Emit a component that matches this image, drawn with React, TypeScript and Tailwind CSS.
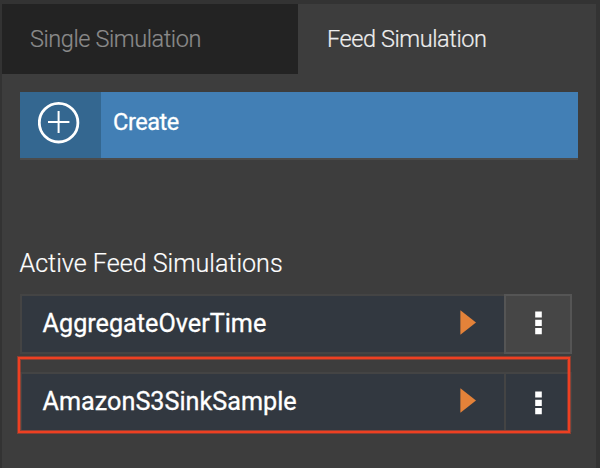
function PlayIcon() {
  return (
    <svg className="mb-[3px] h-[25px] w-4 shrink-0" viewBox="0 0 16 25" aria-hidden="true">
      <path d="M0.4 0.2 16 12.5 0.4 24.8Z" fill="#e48239" />
    </svg>
  );
}

function MoreIcon() {
  return (
    <svg className="h-6 w-[7px] shrink-0" viewBox="0 0 7 24" aria-hidden="true">
      <path d="M.2.4h6.6v6.2H.2zM.2 8.7h6.6v6.2H.2zM.2 17h6.6v6.2H.2z" fill="#fff" />
    </svg>
  );
}

function SimulationRow({ name, selected }: { name: string; selected: boolean }) {
  return (
    <div className="flex h-[60px] w-[552px]">
      <div className="flex w-[484px] items-center justify-between border-2 border-r-0 border-[#444444] bg-[#323840] pr-7 pl-[20.6px]">
        <span className="text-[25.2px] leading-7 font-normal whitespace-nowrap text-white [-webkit-text-stroke:0.3px_white]">{name}</span>
        <PlayIcon />
      </div>
      <button
        aria-label={`${name} options`}
        className={
          selected
            ? "flex w-[68px] justify-center border-2 border-[#444444] bg-[#323840] pt-[17px]"
            : "flex w-[68px] justify-center border-2 border-[#555555] bg-[#464646] pt-[15px]"
        }
      >
        <MoreIcon />
      </button>
    </div>
  );
}

export default function App() {
  return (
    <div className="h-[468px] w-[600px] overflow-hidden bg-[#333333] pt-1 pr-1 pl-0.5 font-['Roboto',sans-serif]">
      <main className="h-[464px] bg-[#3d3d3d]">
        <nav className="flex h-[70px] text-[23.5px] leading-7 font-light tracking-[-0.42px]">
          <button className="w-[296px] bg-[#232323] pl-7 text-left text-[#8b8b8b] [-webkit-text-stroke:0.2px_#8b8b8b]">Single Simulation</button>
          <button className="flex-1 pl-[29px] text-left text-[#eeeeee] [-webkit-text-stroke:0.2px_#eeeeee]">Feed Simulation</button>
        </nav>
        <div className="px-[18px] pt-[18px]">
          <button className="flex h-[68px] w-[558px] border-b-2 border-[#4b4b4b] bg-[#427fb5] text-left">
            <span className="h-[66px] w-[81px] bg-[#346790] pt-2.5 pl-[18px]">
              <svg className="h-[42px] w-[42px]" viewBox="0 0 42 42" fill="none" stroke="#fff" aria-hidden="true">
                <circle cx="20.6" cy="20.7" r="19.3" strokeWidth="2.8" />
                <path d="M10 20h21.4M20.6 9v22" strokeWidth="2" />
              </svg>
            </span>
            <span className="pt-4 pl-3 text-[23.5px] leading-7 tracking-[-0.42px] text-white [-webkit-text-stroke:0.3px_white]">Create</span>
          </button>
          <h1 className="mt-[90px] -ml-[0.5px] text-[25.1px] leading-7 font-light whitespace-nowrap text-white [-webkit-text-stroke:0.2px_white]">Active Feed Simulations</h1>
          <section className="relative mt-4 flex flex-col gap-[18px]">
            <SimulationRow name="AggregateOverTime" selected={false} />
            <SimulationRow name="AmazonS3SinkSample" selected />
            <div className="pointer-events-none absolute top-[63px] -left-0.5 h-[76px] w-[552px] border-2 border-[#ee4022] shadow-[0_0_0_1px_#ee402270,inset_0_0_0_1px_#ee402270]" />
          </section>
        </div>
      </main>
    </div>
  );
}
